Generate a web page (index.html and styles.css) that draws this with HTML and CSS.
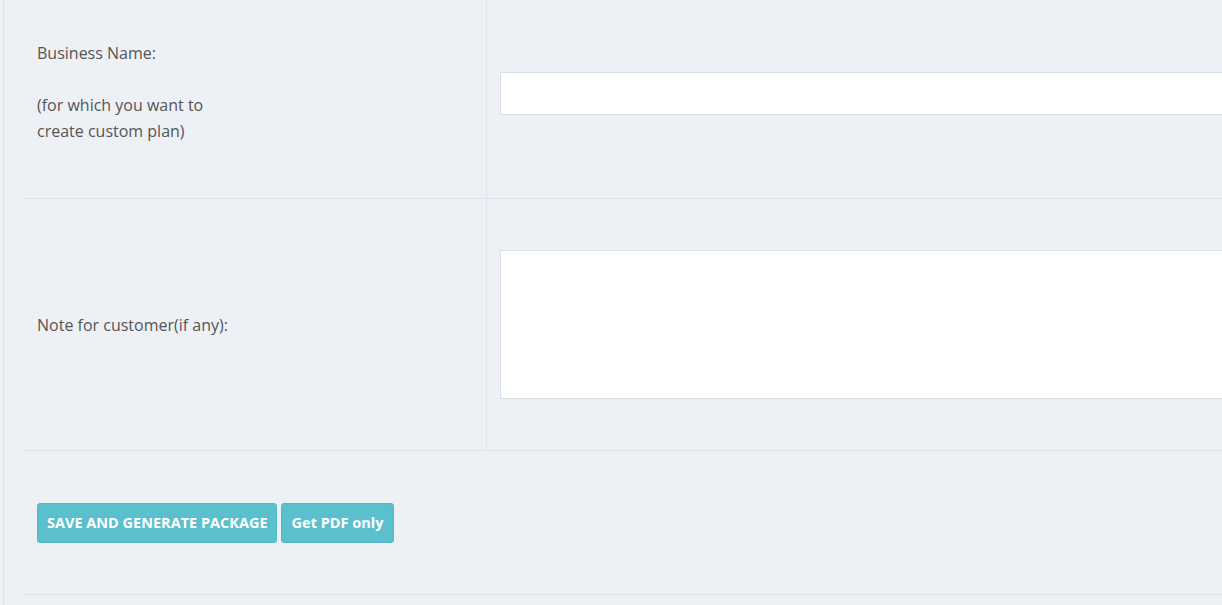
FILE: index.html
```html
<!DOCTYPE html>
<html lang="en">

<head>
  <meta charset="UTF-8">
  <meta name="viewport" content="width=device-width, initial-scale=1.0">
  <title>Custom Plan</title>
  <link rel="stylesheet" href="styles.css">
</head>

<body>
  <div class="page">
    <form class="plan-form">
      <div class="form-row row-name">
        <div class="label-cell">
          <label for="business-name">Business Name:<br><br>(for which you want to<br>create custom plan)</label>
        </div>
        <div class="field-cell">
          <input type="text" id="business-name" class="text-input">
        </div>
      </div>

      <div class="form-row row-note">
        <div class="label-cell">
          <label for="note">Note for customer(if any):</label>
        </div>
        <div class="field-cell">
          <textarea id="note" class="text-area"></textarea>
        </div>
      </div>

      <div class="form-row row-actions">
        <button type="button" class="btn">SAVE AND GENERATE PACKAGE</button>
        <button type="button" class="btn btn-pdf">Get PDF only</button>
      </div>
    </form>
  </div>
</body>

</html>
```

FILE: styles.css
```css
body {
  margin: 0;
  background-color: #edf0f5;
  font-family: "Open Sans", "Noto Sans", sans-serif;
  font-size: 16px;
  color: #555;
  overflow: hidden;
}

.page {
  margin-left: 3px;
  padding-left: 20px;
  border-left: 1px solid #dfe2e8;
  min-height: 605px;
}

.plan-form {
  width: 1500px;
}

.form-row {
  display: flex;
  border-bottom: 1px solid #e0e3e9;
}

.row-name {
  height: 198px;
}

.row-note {
  height: 251px;
}

.row-actions {
  height: 143px;
  align-items: center;
  gap: 4px;
  padding-left: 13px;
}

.label-cell {
  width: 462px;
  box-sizing: border-box;
  padding: 0 13px;
  display: flex;
  align-items: center;
  line-height: 26px;
}

.row-name .label-cell {
  padding-bottom: 14px;
}

.row-name .field-cell {
  padding-bottom: 11px;
}

.field-cell {
  flex: 1;
  display: flex;
  align-items: center;
  padding-left: 13px;
  border-left: 1px solid #e0e3e9;
}

.text-input {
  width: 100%;
  height: 43px;
  box-sizing: border-box;
  border: 1px solid #d9dde4;
  background: #fff;
  margin: 0;
}

.text-area {
  width: 100%;
  height: 149px;
  box-sizing: border-box;
  border: 1px solid #d9dde4;
  background: #fff;
  margin: 0;
  resize: none;
}

.btn {
  height: 40px;
  padding: 0 8px 0 9px;
  border: 1px solid #55b8c5;
  border-radius: 3px;
  background-color: #5bc0cd;
  color: #fff;
  font-family: inherit;
  font-size: 14.5px;
  font-weight: bold;
  cursor: pointer;
}

.btn-pdf {
  padding: 0 10px;
}
```
